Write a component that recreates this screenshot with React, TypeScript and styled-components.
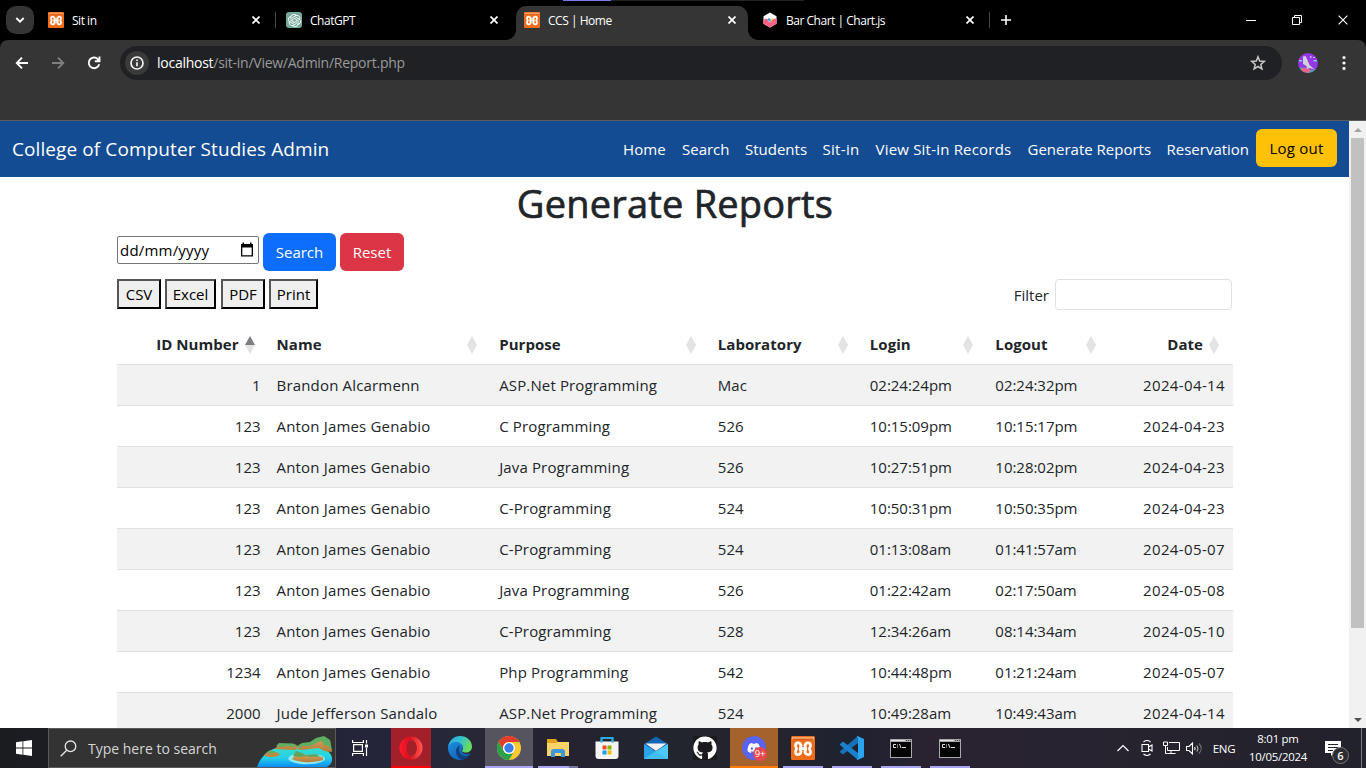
import React from "react";
import styled, { createGlobalStyle, css } from "styled-components";
import { SiOpenai } from "react-icons/si";
import { FaDiscord, FaGithub } from "react-icons/fa";

const GlobalStyle = createGlobalStyle`
  * { box-sizing: border-box; }
  body { margin: 0; overflow: hidden; background: #fff; }
  svg { display: block; flex: none; }
`;

const ui = `"Segoe UI", "Open Sans", "Noto Sans", sans-serif`;

const Screen = styled.div`
  width: 1366px;
  height: 768px;
  display: flex;
  flex-direction: column;
  overflow: hidden;
  font-family: ${ui};
  font-size: 15px;
  color: #212529;
`;

/* ---------- browser chrome ---------- */

const TabStrip = styled.div`
  position: relative;
  height: 40px;
  flex: none;
  display: flex;
  background: #000;
  padding-left: 6px;
`;

const LoadBar = styled.div`
  position: absolute;
  top: 0;
  left: 563px;
  width: 241px;
  height: 1px;
  background: linear-gradient(to right, #7b7bf0 48px, #222 48px);
`;

const TabSearch = styled.button`
  width: 28px;
  height: 28px;
  margin: 6px 6px 0 0;
  padding: 0;
  border: 0;
  border-radius: 10px;
  background: #353535;
  display: flex;
  align-items: center;
  justify-content: center;
`;

const TabBox = styled.div<{ $active?: boolean; $line?: boolean }>`
  position: relative;
  width: 232px;
  height: 34px;
  margin: 6px 6px 0 0;
  padding: 0 12px 6px 8px;
  display: flex;
  align-items: center;
  border-radius: 10px 10px 0 0;
  background: ${(p) => (p.$active ? "#353535" : "transparent")};
  ${(p) =>
    p.$line &&
    css`
      &::after {
        content: "";
        position: absolute;
        left: 235px;
        top: 6px;
        width: 1px;
        height: 16px;
        background: #484848;
      }
    `}
`;

const Flare = styled.i<{ $side: "left" | "right" }>`
  position: absolute;
  bottom: 0;
  width: 10px;
  height: 10px;
  ${(p) => p.$side}: -10px;
  background: radial-gradient(
    circle at ${(p) => (p.$side === "left" ? "0 0" : "10px 0")},
    transparent 9.5px,
    #353535 10.2px
  );
`;

const TabTitle = styled.span`
  flex: 1;
  margin: 1px 0 0 8px;
  font-size: 12px;
  letter-spacing: -0.48px;
  line-height: 16px;
  color: #fff;
  white-space: nowrap;
`;

const WindowControls = styled.div`
  margin-left: auto;
  padding-right: 18px;
  display: flex;
  align-items: center;
  gap: 36px;
`;

const NewTab = styled.div`
  width: 28px;
  height: 40px;
  display: flex;
  align-items: center;
  justify-content: center;
`;

const ToolbarShell = styled.div`
  height: 81px;
  flex: none;
  background: #000;
  border-bottom: 1px solid #5c5c5c;
`;

const Toolbar = styled.div`
  height: 80px;
  background: #353535;
  border-radius: 8px 8px 0 0;
  display: flex;
  align-items: flex-start;
  padding: 6px 14px 0 14px;
`;

const ToolButton = styled.div<{ $w: number }>`
  width: ${(p) => p.$w}px;
  height: 34px;
  display: flex;
  align-items: center;
`;

const Omnibox = styled.div`
  width: 1162px;
  flex: none;
  height: 34px;
  border-radius: 17px;
  background: #202124;
  display: flex;
  align-items: center;
  padding: 0 15px 0 5px;
`;

const InfoBadge = styled.div`
  width: 24px;
  height: 24px;
  border-radius: 50%;
  background: #3a3a3a;
  display: flex;
  align-items: center;
  justify-content: center;
`;

const Url = styled.div`
  flex: 1;
  margin-left: 8px;
  font-size: 14px;
  letter-spacing: -0.26px;
  line-height: 20px;
  color: #9a9a9a;
  b { font-weight: 400; color: #fff; }
`;

/* ---------- page ---------- */

const Viewport = styled.div`
  flex: 1;
  min-height: 0;
  display: flex;
  overflow: hidden;
`;

const Page = styled.main`
  width: 1349px;
  background: #fff;
  overflow: hidden;
`;

const Navbar = styled.nav`
  height: 56px;
  background: #144c94;
  display: flex;
  align-items: center;
  padding: 0 12px;
`;

const Brand = styled.a`
  flex: 1;
  color: #fff;
  font-size: 19px;
  letter-spacing: 0.09px;
`;

const NavLink = styled.a<{ $w: number; $track?: number }>`
  width: ${(p) => p.$w}px;
  margin-right: 16px;
  color: #fff;
  letter-spacing: ${(p) => p.$track ?? 0}px;
  white-space: nowrap;
  &:last-of-type { margin-right: 8px; }
`;

const Button = styled.button<{ $bg: string; $fg?: string; $w: number }>`
  width: ${(p) => p.$w}px;
  height: 38px;
  padding: 0;
  border: 0;
  border-radius: 6px;
  background: ${(p) => p.$bg};
  color: ${(p) => p.$fg ?? "#fff"};
  font: 400 15px/24px ${ui};
`;

const LogoutButton = styled(Button)`
  margin-bottom: 2px;
  letter-spacing: 0.2px;
`;

const Container = styled.div`
  width: 1116px;
  margin-left: 117px;
`;

const Heading = styled.h1`
  margin: 2px 0 6px;
  height: 48px;
  font-size: 38px;
  line-height: 48px;
  font-weight: 400;
  -webkit-text-stroke: 0.7px #212529;
  letter-spacing: 0.2px;
  text-align: center;
  white-space: nowrap;
`;

const SearchRow = styled.div`
  display: flex;
  gap: 4px;
  height: 38px;
`;

const DateField = styled.div`
  width: 142px;
  height: 28px;
  margin-top: 3px;
  padding: 0 4px 0 2px;
  border: 1px solid #767676;
  border-radius: 2px;
  display: flex;
  align-items: center;
  justify-content: space-between;
  color: #000;
  letter-spacing: 0.2px;
`;

const ToolsRow = styled.div`
  display: flex;
  align-items: center;
  height: 31px;
  margin-top: 8px;
`;

const ExportButton = styled.button<{ $w: number; $gap?: number }>`
  width: ${(p) => p.$w}px;
  height: 30px;
  margin: 0 ${(p) => p.$gap ?? 4}px 1px 0;
  padding: 0;
  border: 2px solid;
  border-color: #555 #000 #000 #555;
  background: #efefef;
  color: #000;
  font: 400 15px/24px ${ui};
`;

const FilterLabel = styled.label`
  margin-left: auto;
  margin-right: 1px;
  display: flex;
  align-items: center;
  gap: 6px;
`;

const FilterInput = styled.input`
  width: 177px;
  height: 31px;
  border: 1px solid #dee2e6;
  border-radius: 4px;
`;

const Table = styled.table`
  width: 1116px;
  margin-top: 14px;
  table-layout: fixed;
  border-spacing: 0;
  border-collapse: separate;
`;

const HeadCell = styled.th<{ $right?: boolean }>`
  position: relative;
  height: 41px;
  padding: 0 ${(p) => (p.$right ? 30 : 8)}px 0 8px;
  border-bottom: 1px solid #dee2e6;
  text-align: ${(p) => (p.$right ? "right" : "left")};
  font-weight: 700;
  letter-spacing: 0.05px;
  line-height: 24px;
  white-space: nowrap;
`;

const SortMark = styled.span`
  position: absolute;
  right: 14px;
  top: 12px;
`;

const Row = styled.tr`
  &:nth-child(odd) { background: #f2f2f2; }
`;

const Cell = styled.td<{ $right?: boolean; $track: number }>`
  height: 41px;
  padding: 0 8px;
  border-bottom: 1px solid #dee2e6;
  text-align: ${(p) => (p.$right ? "right" : "left")};
  letter-spacing: ${(p) => p.$track}px;
  line-height: 24px;
  white-space: nowrap;
`;

const ScrollTrack = styled.div`
  width: 17px;
  background: #f1f1f1;
  display: flex;
  flex-direction: column;
  align-items: center;
`;

const ScrollArrow = styled.div`
  height: 17px;
  display: flex;
  align-items: center;
`;

const ScrollThumb = styled.div`
  width: 13px;
  height: 490px;
  margin-bottom: auto;
  background: #c1c1c1;
`;

/* ---------- taskbar ---------- */

const Taskbar = styled.footer`
  height: 40px;
  flex: none;
  display: flex;
  background: linear-gradient(to right, #1b1c20 0, #1c1e25 60px, #24243a 350px, #272838 460px, #25222f 560px, #22252f 620px, #24242d 780px, #1e2230 850px, #2a2231 930px, #27232f 1100px, #22222c 1366px);
`;

const StartButton = styled.div`
  width: 48px;
  display: flex;
  align-items: center;
  justify-content: center;
`;

const TaskSearch = styled.div`
  width: 288px;
  border: 1px solid #5a5a5a;
  background: #333;
  display: flex;
  align-items: center;
  padding: 0 2px 0 11px;
  color: #d5d5d5;
  font-size: 14px;
  span { margin: 0 auto 0 11px; white-space: nowrap; }
  svg:last-child { align-self: flex-end; }
`;

const TaskItem = styled.div<{ $bg?: string; $w?: number; $line?: string; $lineW?: number }>`
  width: ${(p) => p.$w ?? 48}px;
  height: 40px;
  margin: 0 ${(p) => (p.$w ? 5 : 1)}px 0 ${(p) => (p.$w ? 4 : 0)}px;
  position: relative;
  display: flex;
  align-items: center;
  justify-content: center;
  background: ${(p) => p.$bg ?? "transparent"};
  &::after {
    content: "";
    position: absolute;
    bottom: 0;
    left: calc(50% - ${(p) => (p.$lineW ?? 40) / 2}px);
    width: ${(p) => p.$lineW ?? 40}px;
    height: 2px;
    background: ${(p) => p.$line ?? "transparent"};
  }
`;

const GptTile = styled.div`
  width: 16px;
  height: 16px;
  border-radius: 3px;
  background: #74aa9c;
  color: #fff;
  display: flex;
  align-items: center;
  justify-content: center;
`;

const GithubTile = styled.div`
  width: 24px;
  height: 24px;
  background: #1c1a1d;
  color: #fff;
`;

const CountBadge = styled.span`
  position: absolute;
  left: 23px;
  top: 19px;
  width: 14px;
  height: 14px;
  border-radius: 50%;
  background: #e8484f;
  color: #fff;
  font-size: 9.5px;
  line-height: 13px;
  text-align: center;
  letter-spacing: -0.3px;
`;

const Tray = styled.div`
  margin-left: auto;
  display: flex;
  align-items: center;
  color: #fff;
  font-size: 11.5px;
`;

const TrayIcon = styled.span<{ $w: number }>`
  width: ${(p) => p.$w}px;
  display: flex;
  justify-content: center;
`;

const Clock = styled.div`
  width: 78px;
  margin-right: 3px;
  text-align: center;
  font-size: 11.4px;
  line-height: 18px;
  letter-spacing: -0.25px;
  white-space: nowrap;
`;

const Language = styled.span`
  width: 30px;
  margin-left: 3px;
  text-align: center;
  letter-spacing: -0.3px;
`;

const Notice = styled.div`
  position: relative;
  width: 41px;
  padding-left: 5px;
`;

const NoticeCount = styled.span`
  position: absolute;
  left: 12px;
  top: 6px;
  width: 17px;
  height: 17px;
  border: 1px solid #777;
  border-radius: 50%;
  background: #2c2c31;
  font-size: 11px;
  line-height: 15px;
  font-weight: 600;
  text-align: center;
`;

const DesktopEdge = styled.i`
  width: 5px;
  height: 40px;
  border-left: 1px solid #77777c;
`;

/* ---------- drawings ---------- */

const CloseIcon = ({ size = 8, w = 1.7 }: { size?: number; w?: number }) => (
  <svg width={size} height={size} viewBox="0 0 8 8" stroke="#fff" strokeWidth={w} fill="none">
    <path d="M.5.5l7 7M7.500.5l-7 7" />
  </svg>
);

const Xampp = ({ size }: { size: number }) => (
  <svg width={size} height={size} viewBox="0 0 24 24">
    <rect width="24" height="24" rx="1.500" fill="#ef6d1a" />
    <path d="M1 1h22v2.500H1z" fill="#f8a56c" />
    <path d="M2 2.800h20v1H2z" fill="#c95410" />
    <g fill="none" stroke="#fff" strokeWidth="2.700" strokeLinejoin="round" strokeLinecap="round">
      <path d="M10 9.500C9.500 6 4.500 6 4.500 9.500c0 1.600 1 2 1 3.200s-1 1.600-1 3.200c0 3.500 5 3.500 5.500 0" />
      <path d="M14 9.500c.5-3.500 5.500-3.500 5.500 0 0 1.600-1 2-1 3.200s1 1.600 1 3.200c0 3.500-5 3.500-5.500 0" />
      <path d="M10 9.500c0 1.500-.8 2-.8 3.200s.8 1.700.8 3.200M14 9.500c0 1.500.8 2 .8 3.200s-.8 1.700-.8 3.200M9.500 12.700h5" />
    </g>
  </svg>
);

const ChartLogo = () => (
  <svg width="16" height="16" viewBox="0 0 16 16">
    <path d="M8 .5l6.500 3.700v7.600L8 15.500l-6.500-3.700V4.200z" fill="#fff" />
    <path d="M1.500 7.500l3-1 3.500 4 3-3.500 3.500-.5v5.300L8 15.500l-6.500-3.700z" fill="#ff6384" />
    <path d="M5 7.500l2-1.500 2 1.500 2-1-2.500 3.500z" fill="#36a2eb" />
    <path d="M8.500 8l2-2.500 1 1.500-2.500 3z" fill="#ffcd56" />
  </svg>
);

const Avatar = () => (
  <svg width="20" height="20" viewBox="0 0 20 20">
    <clipPath id="face"><circle cx="10" cy="10" r="10" /></clipPath>
    <g clipPath="url(#face)">
      <path fill="#9337e8" d="M0 0h20v20H0z" />
      <path fill="#3fb7a0" d="M0 15l5-.5 9 3 6-2.500v5H0z" />
      <path fill="#e8628c" d="M3 16l4-1.500 6 2.500-3 3H4z" />
      <path fill="#cfd2d6" d="M5 3.500L7.500 3 9 6l2.500 6 5 4.500-5-1.500L9 16l-.5-3L5 11z" />
      <path fill="#7fd0ee" d="M1 7h3v1.500H1zM15.500 7h3.500v1.500h-3.500z" />
      <path fill="#c9b3e6" d="M12 3h1.500v2H12zM15 4h2v1h-2z" />
    </g>
  </svg>
);

const SortArrows = ({ up }: { up?: boolean }) => (
  <svg width="10" height="18" viewBox="0 0 10 18">
    <path d="M5 0l5 9H0z" fill={up ? "#7c7e81" : "#e1e3e4"} />
    <path d="M0 9h10l-5 9z" fill="#e1e3e4" />
  </svg>
);

const Island = () => (
  <svg width="76" height="31" viewBox="0 0 76 31">
    <defs>
      <linearGradient id="sea" x1="0" y1="0" x2="0" y2="1">
        <stop offset="0" stopColor="#35e0c8" />
        <stop offset="0.55" stopColor="#25cfe8" />
        <stop offset="1" stopColor="#0c8cf5" />
      </linearGradient>
      <linearGradient id="soil" x1="0" y1="0" x2="0" y2="1">
        <stop offset="0" stopColor="#d7a45c" />
        <stop offset="1" stopColor="#b87a3a" />
      </linearGradient>
    </defs>
    <path d="M0 31C3 22 10 14 22 11h34c12 0 20 6 19 13 0 3-2 5-5 7z" fill="url(#sea)" />
    <path d="M18 13l3-4h17l3 1-2 4-12-.5zM40 13l4-4 8-2 9-5 7-1 5 4 2 11c-8 0-10-3-14-4l-16 2z" fill="url(#soil)" />
    <path d="M19 10l3-3 14 .5 4 1.500-4 2-6-1-6 1zM40 10l5-3 8-1 6-4 8-2 6 4 2 11-4-5-4-1-2-4-4 1-8 4-7 0-5 2z" fill="#5fae62" />
    <path d="M7 19c4-5 13-4 16-.5-2 3-12 3.500-16 .5z" fill="#c08843" />
    <path d="M9 17l3-2.500 5 .5 2 1.500-4 1z" fill="#62ae62" />
    <path d="M31 23c2-6 12-6 20-4 10-1 17 0 17 4-2 6-30 8-37 0z" fill="#8beaf2" />
    <path d="M35 23l4-5 14 1 13 2v3c-9 3-24 3-31-1z" fill="url(#soil)" />
    <path d="M36 20l3-5 6 2 4 2 10-1 4 2.500-9 .5-5-1-6 1z" fill="#5fa55c" />
  </svg>
);

const OperaIcon = () => (
  <svg width="24" height="24" viewBox="0 0 24 24">
    <defs>
      <linearGradient id="op" x1="0" x2="1"><stop offset="0" stopColor="#ff1b2d" /><stop offset=".45" stopColor="#d8101f" /><stop offset="1" stopColor="#ff5b55" /></linearGradient>
    </defs>
    <path fillRule="evenodd" fill="url(#op)" d="M12 .5a11.500 11.500 0 100 23 11.500 11.500 0 000-23zM12.800 3.800c2.900 0 5.200 3.700 5.200 8.200s-2.300 8.200-5.200 8.200S7.600 16.500 7.600 12s2.300-8.200 5.200-8.200z" />
    <path fill="#fb3a3c" d="M10 4.800c5-3 11 1 11 7.200s-6 10.200-11 7.200c1 .7 2 1 2.800 1 2.900 0 5.200-3.700 5.200-8.200S15.700 3.800 12.800 3.800c-.9 0-1.900.3-2.800 1z" />
  </svg>
);

const EdgeIcon = () => (
  <svg width="24" height="24" viewBox="0 0 24 24">
    <defs>
      <linearGradient id="eg" x1="0" x2="1" y2=".3"><stop offset="0" stopColor="#2aa9e8" /><stop offset=".55" stopColor="#35c1d0" /><stop offset="1" stopColor="#68db5e" /></linearGradient>
      <linearGradient id="eb" x1="0" x2="1" y1="0" y2="1"><stop offset="0" stopColor="#1e8fe0" /><stop offset="1" stopColor="#0b57a8" /></linearGradient>
    </defs>
    <path fill="url(#eb)" d="M0 12c0-5 4-7 8-7 5 0 7 3 7 6 0 1-1 2-1.500 3-.5 2 2 4 5 4 1.500 0 3-.5 4-1-2 4-6 7-10.500 7C5 24 0 18.500 0 12z" />
    <path fill="#123f7d" d="M8 15c0-3 2-5 4-5-3 5 1 10 6.500 10 1.500 0 3-1 3.500-1.500C19 23 15.500 24 13 23.500 10 22 8 19 8 15z" />
    <path fill="url(#eg)" d="M0 11C1 4.500 6 0 12 0c7 0 12 5 12 10.500 0 4-3 6-6 6-2.500 0-4-.8-4-1.800 0-.7 1-1.200 1-3C15 8.500 12 6 8 6c-4 0-7 2-8 5z" />
  </svg>
);

const ChromeIcon = () => (
  <svg width="24" height="24" viewBox="0 0 24 24">
    <circle cx="12" cy="12" r="12" fill="#fcc934" />
    <path fill="#e33b2e" d="M12 0c4.400 0 8.300 2.400 10.400 6H12a6 6 0 00-5.200 9L1.600 6A12 12 0 0112 0z" />
    <path fill="#2ba14b" d="M1.600 6l5.200 9a6 6 0 0010.400 0L12 24A12 12 0 011.600 6z" />
    <circle cx="12" cy="12" r="6" fill="#fff" />
    <circle cx="12" cy="12" r="4.700" fill="#3b7ded" />
  </svg>
);

const FolderIcon = () => (
  <svg width="22" height="19" viewBox="0 0 22 19">
    <path fill="#e2a21c" d="M0 0h9l2 3h11v5H0z" />
    <path fill="#fbd367" d="M0 4h9l2-1h11v14H0z" />
    <path fill="#3d97dc" d="M4 18v-6.500L6 10h10l2 1.500V18h-4v-4H8v4z" />
  </svg>
);

const StoreIcon = () => (
  <svg width="24" height="24" viewBox="0 0 24 24">
    <path d="M6.500 7V2h11v5" fill="none" stroke="#2aaee6" strokeWidth="2.200" />
    <path d="M.5 5.500h23V20a3 3 0 01-3 3h-17a3 3 0 01-3-3z" fill="#f5f5f5" />
    <path fill="#29a6df" d="M5.400 4h2.200v2.500H5.400zM16.400 4h2.200v2.500h-2.200z" />
    <path fill="#f25022" d="M7.500 9.500h4v4h-4z" /><path fill="#7fba00" d="M12.500 9.500h4v4h-4z" />
    <path fill="#00a4ef" d="M7.500 14.500h4v4h-4z" /><path fill="#ffb900" d="M12.500 14.500h4v4h-4z" />
  </svg>
);

const MailIcon = () => (
  <svg width="24" height="24" viewBox="0 0 24 24">
    <path fill="#1664b4" d="M0 8l12-7.500L24 8v5H0z" />
    <path fill="#f1f1f1" d="M1.500 7.500h21L12 15z" />
    <path fill="#4ec8f7" d="M24 8v15H0z" />
    <path fill="#29a4e8" d="M0 8l24 15H0z" />
    <path fill="#4ec8f7" d="M24 8v15H0l12-8z" opacity=".7" />
  </svg>
);

const CodeIcon = () => (
  <svg width="24" height="24" viewBox="0 0 24 24">
    <path fill="#1572b8" d="M18 0v7L3 18.500 0 16.200v-1z" />
    <path fill="#1b80cc" d="M0 8l3-2.500L18 17v7L0 9z" />
    <path fill="#2ba4f0" d="M17.500 0L24 3v18l-6.500 3-.8-1 1.300-1V2l-1.300-1z" />
  </svg>
);

const TerminalIcon = () => (
  <svg width="22" height="19" viewBox="0 0 22 19">
    <path fill="#a7a9ab" d="M0 0h22v19H0z" />
    <path fill="#e4e4e4" d="M1 1h14v1H1z" />
    <path fill="#444" d="M16 1h1v1h-1zM18 1h1v1h-1zM20 1h1v1h-1z" />
    <path fill="#050505" d="M1 3h20v15H1z" />
    <path fill="none" stroke="#ddd" d="M6 5.500H3.500v3H6M7.500 5.500v1M7.500 7.500v1M9.500 5l1.500 4M12 8.500h4" />
  </svg>
);

/* ---------- data ---------- */

const links: [string, number, number?][] = [
  ["Home", 43, 0.1], ["Search", 47], ["Students", 61.5], ["Sit-in", 37, 0.3],
  ["View Sit-in Records", 136, 0.2], ["Generate Reports", 123], ["Reservation", 81.500],
];

const columns: [string, number][] = [
  ["ID Number", 151.5], ["Name", 222.5], ["Purpose", 218.5], ["Laboratory", 152],
  ["Login", 125.5], ["Logout", 123], ["Date", 122.5],
];

// letter tracking of the body text in each column
const tracking = [0, 0.17, 0.14, 0.1, -0.03, -0.03, 0.37];

const anton = "Anton James Genabio";
const records = [
  ["1", "Brandon Alcarmenn", "ASP.Net Programming", "Mac", "02:24:24pm", "02:24:32pm", "2024-04-14"],
  ["123", anton, "C Programming", "526", "10:15:09pm", "10:15:17pm", "2024-04-23"],
  ["123", anton, "Java Programming", "526", "10:27:51pm", "10:28:02pm", "2024-04-23"],
  ["123", anton, "C-Programming", "524", "10:50:31pm", "10:50:35pm", "2024-04-23"],
  ["123", anton, "C-Programming", "524", "01:13:08am", "01:41:57am", "2024-05-07"],
  ["123", anton, "Java Programming", "526", "01:22:42am", "02:17:50am", "2024-05-08"],
  ["123", anton, "C-Programming", "528", "12:34:26am", "08:14:34am", "2024-05-10"],
  ["1234", anton, "Php Programming", "542", "10:44:48pm", "01:21:24am", "2024-05-07"],
  ["2000", "Jude Jefferson Sandalo", "ASP.Net Programming", "524", "10:49:28am", "10:49:43am", "2024-04-14"],
];

const isRight = (i: number) => i === 0 || i === 6;

const Tab = ({ icon, title, active, line }: { icon: React.ReactNode; title: string; active?: boolean; line?: boolean }) => (
  <TabBox $active={active} $line={line}>
    {active && <><Flare $side="left" /><Flare $side="right" /></>}
    {icon}
    <TabTitle>{title}</TabTitle>
    <CloseIcon />
  </TabBox>
);

const BrowserChrome = () => (
  <>
    <TabStrip>
      <LoadBar />
      <TabSearch>
        <svg width="10" height="6" viewBox="0 0 10 6" fill="none" stroke="#fff" strokeWidth="1.900"><path d="M1.300 1L5 4.600 8.700 1" /></svg>
      </TabSearch>
      <Tab icon={<Xampp size={16} />} title="Sit in" line />
      <Tab icon={<GptTile><SiOpenai size={13} /></GptTile>} title="ChatGPT" />
      <Tab icon={<Xampp size={16} />} title="CCS | Home" active />
      <Tab icon={<ChartLogo />} title="Bar Chart | Chart.js" line />
      <NewTab>
        <svg width="10" height="10" viewBox="0 0 10 10" stroke="#fff" strokeWidth="1.600"><path d="M5 0v10M0 5h10" /></svg>
      </NewTab>
      <WindowControls>
        <svg width="10" height="10" viewBox="0 0 10 10"><path d="M0 5.500h10" stroke="#fff" /></svg>
        <svg width="10" height="10" viewBox="0 0 10 10" fill="none" stroke="#fff"><path d="M.5 2.500h7v7h-7zM2.500 2.500v-2h7v7h-2" /></svg>
        <CloseIcon size={10} w={0.9} />
      </WindowControls>
    </TabStrip>
    <ToolbarShell>
      <Toolbar>
        <ToolButton $w={36}>
          <svg width="16" height="16" viewBox="0 0 16 16" fill="none" stroke="#fff" strokeWidth="1.800"><path d="M14 8H3M8 2.700L2.700 8 8 13.300" /></svg>
        </ToolButton>
        <ToolButton $w={36}>
          <svg width="16" height="16" viewBox="0 0 16 16" fill="none" stroke="#808080" strokeWidth="1.800"><path d="M2 8h11M8 2.700L13.300 8 8 13.300" /></svg>
        </ToolButton>
        <ToolButton $w={34}>
          <svg width="16" height="16" viewBox="0 0 16 16" fill="none" stroke="#fff" strokeWidth="1.900"><path d="M13.200 9.200A5.300 5.300 0 1112 4.300l1 1.100M13.500 1.500v4.700H8.800" /></svg>
        </ToolButton>
        <Omnibox>
          <InfoBadge>
            <svg width="14" height="14" viewBox="0 0 14 14" fill="none" stroke="#f2f2f2" strokeWidth="1.700"><circle cx="7" cy="7" r="6" /><path d="M7 6.200v4M7 3.500v1.500" /></svg>
          </InfoBadge>
          <Url><b>localhost</b>/sit-in/View/Admin/Report.php</Url>
          <svg width="18" height="18" viewBox="0 0 18 18" fill="none" stroke="#c8c8c8" strokeWidth="1.500"><path d="M9 2.700l1.700 4.300 4.600.4-3.500 3 1.100 4.500L9 12.500l-3.900 2.400 1.100-4.500-3.500-3 4.600-.4z" /></svg>
        </Omnibox>
        <ToolButton $w={54}><svg width="16" height="1" /><Avatar /></ToolButton>
        <ToolButton $w={16}>
          <svg width="16" height="16" viewBox="0 0 16 16" fill="#fff"><circle cx="8" cy="2.600" r="1.600" /><circle cx="8" cy="8" r="1.600" /><circle cx="8" cy="13.400" r="1.600" /></svg>
        </ToolButton>
      </Toolbar>
    </ToolbarShell>
  </>
);

const ReportTable = () => (
  <Table>
    <colgroup>{columns.map(([name, w]) => <col key={name} width={w} />)}</colgroup>
    <thead>
      <tr>
        {columns.map(([name], i) => (
          <HeadCell key={name} $right={isRight(i)}>
            {name}
            <SortMark><SortArrows up={i === 0} /></SortMark>
          </HeadCell>
        ))}
      </tr>
    </thead>
    <tbody>
      {records.map((r, n) => (
        <Row key={n}>{r.map((v, i) => <Cell key={i} $right={isRight(i)} $track={tracking[i]}>{v}</Cell>)}</Row>
      ))}
    </tbody>
  </Table>
);

const violet = "#a9a4f4";

export default function App() {
  return (
    <Screen>
      <GlobalStyle />
      <BrowserChrome />
      <Viewport>
        <Page>
          <Navbar>
            <Brand>College of Computer Studies Admin</Brand>
            {links.map(([t, w, track]) => <NavLink key={t} $w={w} $track={track}>{t}</NavLink>)}
            <LogoutButton $bg="#ffc107" $fg="#000" $w={81}>Log out</LogoutButton>
          </Navbar>
          <Container>
            <Heading>Generate Reports</Heading>
            <SearchRow>
              <DateField>
                dd/mm/yyyy
                <svg width="14" height="16" viewBox="0 0 14 16"><path fillRule="evenodd" d="M1 2h1.500V.5H4V2h6V.5h1.500V2H13v12.500H1zM2.300 5.500v7.700h9.400V5.500z" /></svg>
              </DateField>
              <Button $bg="#0d6efd" $w={73}>Search</Button>
              <Button $bg="#dc3545" $w={64}>Reset</Button>
            </SearchRow>
            <ToolsRow>
              <ExportButton $w={44}>CSV</ExportButton>
              <ExportButton $w={51} $gap={5}>Excel</ExportButton>
              <ExportButton $w={44}>PDF</ExportButton>
              <ExportButton $w={49}>Print</ExportButton>
              <FilterLabel>Filter<FilterInput /></FilterLabel>
            </ToolsRow>
            <ReportTable />
          </Container>
        </Page>
        <ScrollTrack>
          <ScrollArrow><svg width="8" height="4" viewBox="0 0 8 4"><path d="M4 0l4 4H0z" fill="#a3a3a3" /></svg></ScrollArrow>
          <ScrollThumb />
          <ScrollArrow><svg width="8" height="4" viewBox="0 0 8 4"><path d="M0 0h8L4 4z" fill="#505050" /></svg></ScrollArrow>
        </ScrollTrack>
      </Viewport>
      <Taskbar>
        <StartButton>
          <svg width="16" height="16" viewBox="0 0 16 16" fill="#fff"><path d="M0 2.200l6.500-.9v6.300H0zM7.300 1.200L16 0v7.600H7.300zM0 8.400h6.500v6.300L0 13.800zM7.300 8.400H16V16l-8.700-1.200z" /></svg>
        </StartButton>
        <TaskSearch>
          <svg width="17" height="17" viewBox="0 0 17 17" fill="none" stroke="#e6e6e6" strokeWidth="1.300"><circle cx="10.500" cy="6.300" r="5.300" /><path d="M6.700 10.200L.7 16.300" /></svg>
          <span>Type here to search</span>
          <Island />
        </TaskSearch>
        <TaskItem>
          <svg width="17" height="16" viewBox="0 0 17 16" fill="none" stroke="#fff" strokeWidth="1.200"><path d="M.6 0v2.500h10.800V0M.6 16v-2.500h10.800V16M1.600 4.700h8.800v6.600H1.600zM14.500 0v3.500M14.500 8v8" /><path fill="#fff" stroke="none" d="M13 4.500h3v3h-3z" /></svg>
        </TaskItem>
        <svg width="2" height="1" />
        <TaskItem $w={40} $bg="#a3202b" $line="#f00"><OperaIcon /></TaskItem>
        <TaskItem><EdgeIcon /></TaskItem>
        <TaskItem $bg="#55545f" $line={violet} $lineW={48}><ChromeIcon /></TaskItem>
        <TaskItem $line={`linear-gradient(to right, ${violet} 31px, #77749f 31px)`}><FolderIcon /></TaskItem>
        <TaskItem><StoreIcon /></TaskItem>
        <TaskItem><MailIcon /></TaskItem>
        <TaskItem><GithubTile><FaGithub size={24} /></GithubTile></TaskItem>
        <TaskItem $bg="#a5622d" $line="#ff7b00" $lineW={48}>
          <svg width="24" height="24" viewBox="0 0 24 24"><circle cx="12" cy="12" r="12" fill="#5865f2" /><FaDiscord x="5" y="5" size={14} color="#fff" /></svg>
          <CountBadge>9+</CountBadge>
        </TaskItem>
        <TaskItem $line={violet}><Xampp size={24} /></TaskItem>
        <TaskItem $line={violet}><CodeIcon /></TaskItem>
        <TaskItem $line={violet}><TerminalIcon /></TaskItem>
        <TaskItem $line={violet}><TerminalIcon /></TaskItem>
        <Tray>
          <TrayIcon $w={24}><svg width="12" height="8" viewBox="0 0 12 8" fill="none" stroke="#fff" strokeWidth="1.200"><path d="M.5 7L6 1.500 11.500 7" /></svg></TrayIcon>
          <TrayIcon $w={24}><svg width="12" height="16" viewBox="0 0 12 16" fill="none" stroke="#fff" strokeWidth="1.100"><path d="M1 4.500h6.500v7H1zM7.500 7L11 5v6L7.500 9M2.500 2C4.500.3 7.500.3 9.500 2M2.500 14c2 1.700 5 1.700 7 0" /></svg></TrayIcon>
          <TrayIcon $w={24}><svg width="17" height="14" viewBox="0 0 17 14" fill="none" stroke="#fff"><path d="M6 1.500h10.500v8H4.500V6M8 9.500v3M4.500 12.500h8M.5 1v3.500h4V1zM2.500 4.500v8h2" /></svg></TrayIcon>
          <TrayIcon $w={23}><svg width="17" height="13" viewBox="0 0 17 13" fill="none" stroke="#fff" strokeWidth="1.100"><path d="M.5 4.500H3l3.500-3.500v11L3 8.500H.5zM8.500 5c.8 1 .8 2 0 3" /><path stroke="#bbb" d="M10.700 3.500c1.600 2 1.600 4 0 6" /><path stroke="#777" d="M13 1.500c2.800 3 2.800 7 0 10" /></svg></TrayIcon>
          <Language>ENG</Language>
          <Clock>8:01 pm<br />10/05/2024</Clock>
          <Notice>
            <svg width="16" height="15" viewBox="0 0 16 15"><path fill="#fff" d="M0 0h16v12H9l-3 3v-3H0z" /><path stroke="#24242c" d="M3 3.500h10M3 6.500h10M3 9.500h5" /></svg>
            <NoticeCount>6</NoticeCount>
          </Notice>
          <DesktopEdge />
        </Tray>
      </Taskbar>
    </Screen>
  );
}
